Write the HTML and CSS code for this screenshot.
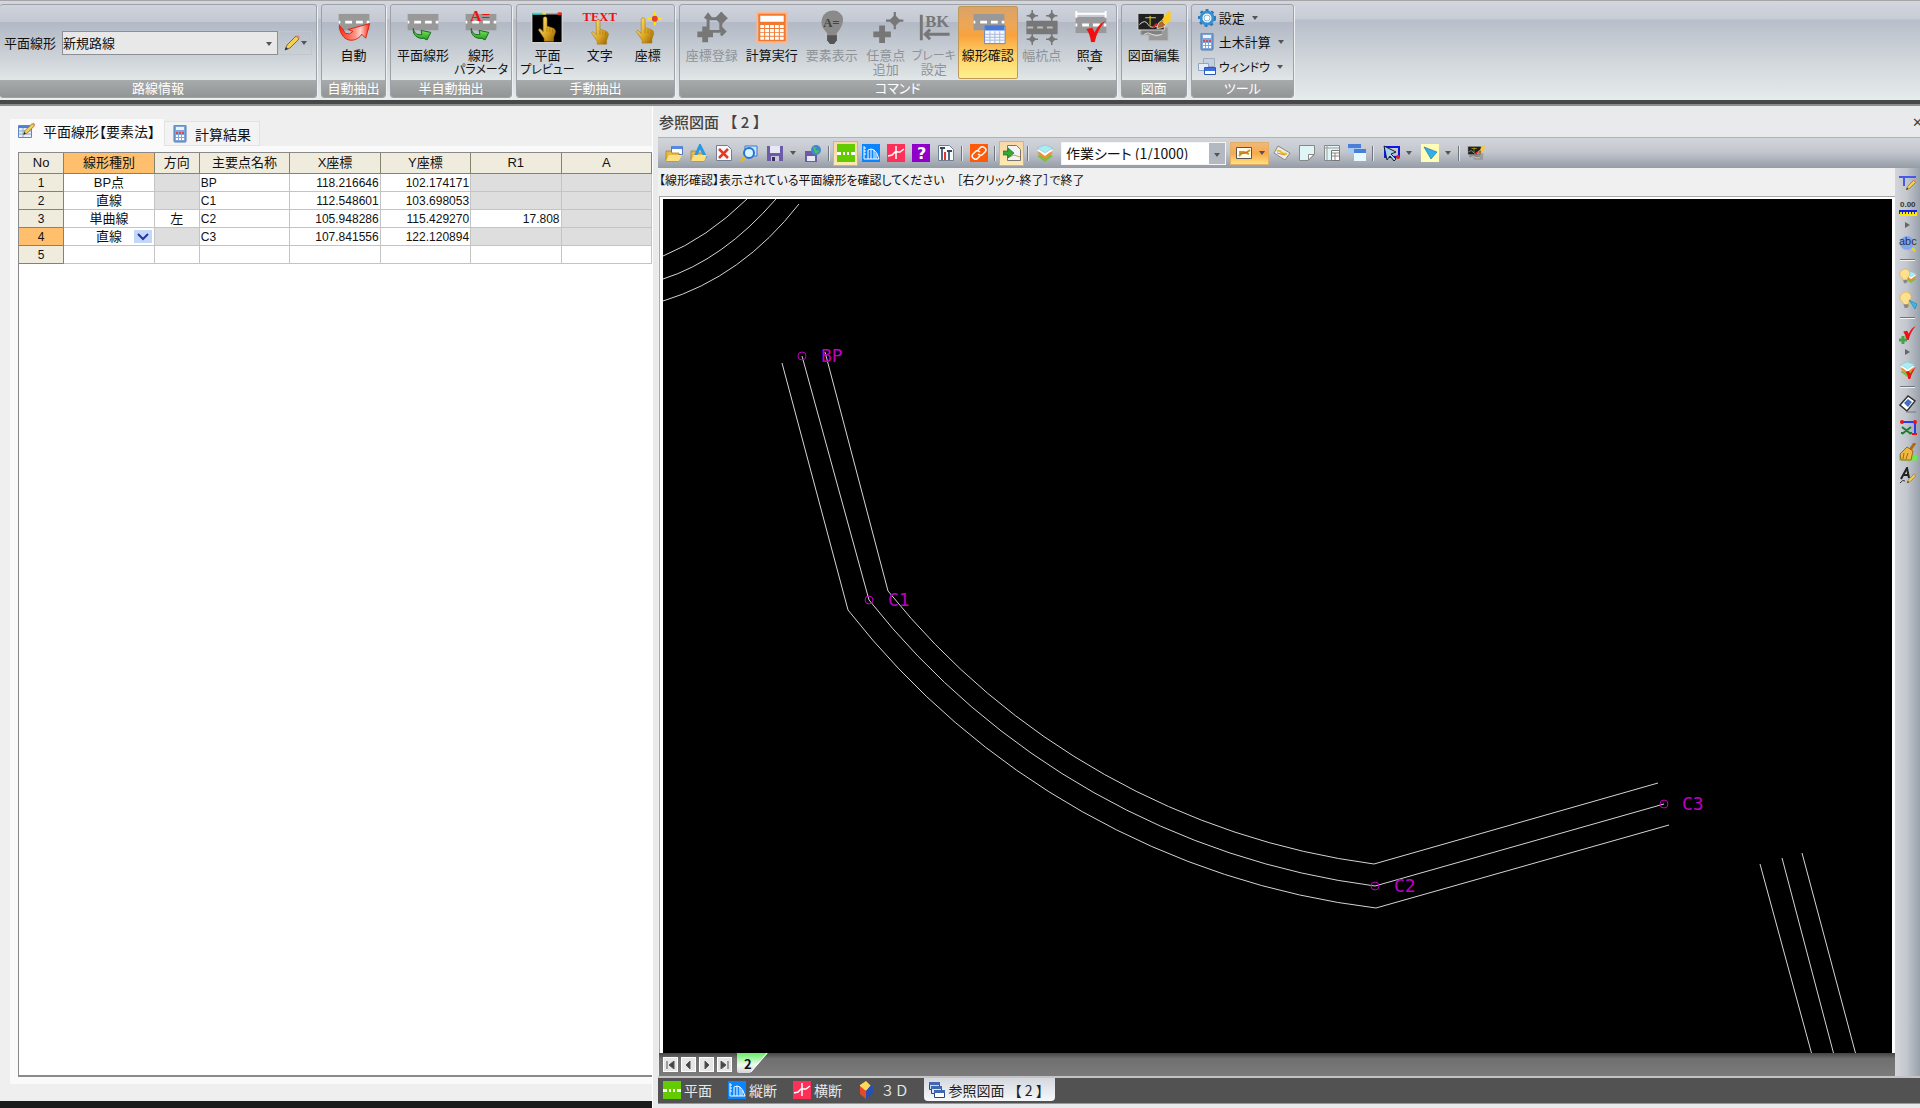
FILE: index.html
```html
<!DOCTYPE html>
<html lang="ja">
<head>
    <meta charset="UTF-8">
    <meta name="viewport" content="width=device-width, initial-scale=1.0">
    <title>平面線形</title>
    <link rel="stylesheet" href="styles.css">
</head>
<body>

    <!-- Shared icon parts -->
    <svg class="defs" width="0" height="0" aria-hidden="true">
        <defs>
            <linearGradient id="gold" x1="0" y1="0" x2="1" y2="1">
                <stop offset="0" stop-color="#ffe98a"/><stop offset="0.6" stop-color="#dba421"/><stop offset="1" stop-color="#8f5f08"/>
            </linearGradient>
            <linearGradient id="leaf" x1="0" y1="0" x2="0" y2="1">
                <stop offset="0" stop-color="#8df06a"/><stop offset="1" stop-color="#1c9a1c"/>
            </linearGradient>
            <linearGradient id="flame" x1="0" y1="0" x2="1" y2="0">
                <stop offset="0" stop-color="#ff2a10"/><stop offset="0.5" stop-color="#ff9080"/><stop offset="0.7" stop-color="#ffd0c8"/><stop offset="1" stop-color="#f02c10"/>
            </linearGradient>
            <linearGradient id="sheetTab" x1="0" y1="0" x2="0" y2="1">
                <stop offset="0" stop-color="#62ee62"/><stop offset="0.6" stop-color="#f2fbf2"/><stop offset="1" stop-color="#d4d4dc"/>
            </linearGradient>
        </defs>
        <symbol id="road" viewBox="0 0 32 17">
            <path fill="currentColor" d="M0 0h32v17H0z"/>
            <path fill="#fff" d="M0 7h2v3H0zM7 7h7v3H7zM18 7h7v3h-7zM29 7h3v3h-3z"/>
        </symbol>
        <symbol id="turn" viewBox="0 0 20 14">
            <path d="M1 2c1 6 5 7 9 6l-1-4 10 2-4 8-3-2C6 13 0 9 1 2z" fill="url(#leaf)" stroke="#14681a"/>
        </symbol>
        <symbol id="hand" viewBox="0 0 20 28">
            <path d="M6 17V3q0-2 2-2t2 2v8l6 2q3 1 3 4l-2 6v4H7v-3l-6-9q1-3 5 2z" fill="url(#gold)" stroke="#a87812" stroke-width="0.6"/>
            <path d="M10 12v5M13 13v4M16 14v4" stroke="#9c6c0c" stroke-width="0.7"/>
        </symbol>
        <symbol id="spark" viewBox="0 0 12 12">
            <path d="M6 0v12M0 6h12" stroke="currentColor" stroke-width="1.5"/>
            <path d="M6 2l4 4-4 4-4-4z" fill="currentColor"/>
        </symbol>
        <symbol id="tick" viewBox="0 0 18 18">
            <path d="M1 7l5-1 2 4q3-7 9-10Q10 8 8 18H5Q4 11 1 7z" fill="#f01010"/>
        </symbol>
        <symbol id="caret" viewBox="0 0 6 4"><path d="M0 0h6L3 4z" fill="#555"/></symbol>
        <symbol id="arrow-right" viewBox="0 0 5 6"><path d="M0 0l5 3-5 3z" fill="#666"/></symbol>
        <symbol id="pencil" viewBox="0 0 18 18">
            <path d="M2 16l2-5L13 2l3 3-9 9z" fill="#f3cf55" stroke="#6b5320" stroke-width="0.8"/>
            <path d="M13 2l2-1 2 2-1 2z" fill="#e88878"/><path d="M2 16l1-3 2 2z" fill="#222"/>
        </symbol>
        <symbol id="calc" viewBox="0 0 16 18">
            <rect x="2" y="0" width="12" height="17" rx="1" fill="#7ea6dc" stroke="#5078b0"/>
            <path fill="#e8f3ff" d="M4 2h8v3H4z"/>
            <path d="M4 8h8M4 11h8M4 14h8" stroke="#fff" stroke-width="2" stroke-dasharray="2 1"/>
            <path d="M4 8h8" stroke="#e04848" stroke-width="2" stroke-dasharray="2 1"/>
        </symbol>
        <symbol id="plan" viewBox="0 0 18 18">
            <path fill="#63cc00" d="M0 0h18v18H0z"/><path fill="#fff" d="M0 8h4v3H0zM6 8h2v3H6zM10 8h2v3h-2zM14 8h4v3h-4z"/>
        </symbol>
        <symbol id="profile" viewBox="0 0 18 18">
            <path fill="#0a84ff" d="M0 0h18v18H0z"/>
            <path d="M2 2v13h15M2 4h2M2 7h2M2 10h2M6 15V6l3-1v10M12 15V6l-3-1M12 6q3 2 5 9M14 15V9" fill="none" stroke="#fff"/>
        </symbol>
        <symbol id="cross" viewBox="0 0 18 18">
            <path fill="#ff3058" d="M0 0h18v18H0z"/>
            <path d="M1 12l4-1 3-3h5l4-3M9 2v13" fill="none" stroke="#fff" stroke-width="1.5"/>
        </symbol>
        <symbol id="stack" viewBox="0 0 18 18">
            <path d="M1 12l8-3 8 3-8 6z" fill="#78c040"/><path d="M1 9l8-3 8 3-8 6z" fill="#f09030"/>
            <path d="M1 6l8-3 8 3-8 6z" fill="#fff"/><path d="M1 4l8-3 8 3-8 5z" fill="#a8ecf4" stroke="#80b8c8" stroke-width="0.5"/>
        </symbol>
        <symbol id="windows" viewBox="0 0 18 18">
            <path fill="#c4d0e0" stroke="#a0acbc" d="M5.500.5h11v8h-11z"/><path fill="#e4ecf8" stroke="#90a4c4" d="M.5 5.500h10v7h-10z"/>
            <path fill="#fff" stroke="#2c58b8" d="M6.500 9.500h11v7h-11z"/><path fill="#3c70e0" d="M7 10h10v3H7z"/>
        </symbol>
        <symbol id="bulb" viewBox="0 0 18 18">
            <path d="M4 11Q0 8 1 4.500Q3 0 7 0q5 0 6 5 0 3-3 6v3H5z" fill="#ffe08c" stroke="#d8a850" stroke-width="0.7"/>
            <path fill="#888" d="M5 13h5v3l-2 1H6z"/>
        </symbol>
        <symbol id="drawing" viewBox="0 0 36 32">
            <path fill="#999" stroke="#bbb" d="M12.500 16.500h20v14h-20z"/><path fill="#808080" stroke="#aaa" d="M4.500 12.500h22v12h-22z"/>
            <path fill="#202020" stroke="#ddd" d="M1.500 2.500h27v17h-27z"/>
            <path d="M3 14q6-6 9 0t14-1M8 24q4-3 8 0t10 0" fill="none" stroke="#ddd"/><path d="M14 5v10M9 7h11" stroke="#e6d820"/>
            <path d="M17 17l4-4" stroke="#e02020" stroke-width="2"/>
            <path d="M26 9L33 0l2 1v9l-5 4z" fill="#ffca20"/><path d="M21 18q1-7 5-8l4 4q-2 4-9 4z" fill="#b06828" stroke="#fff" stroke-width="0.7"/>
        </symbol>
    </svg>

    <header class="ribbon">
        <section class="group route">
            <div class="group-body">
                <label for="route">平面線形</label>
                <div class="select-box route-select">
                    <select id="route"><option>新規路線</option></select>
                    <svg class="caret"><use href="#caret"/></svg>
                </div>
                <button class="edit" aria-label="編集">
                    <svg width="18" height="18"><use href="#pencil"/></svg>
                    <svg class="caret"><use href="#caret"/></svg>
                </button>
            </div>
            <h2>路線情報</h2>
        </section>

        <section class="group auto">
            <div class="group-body">
                <button class="big">
                    <svg viewBox="0 0 36 42"><use href="#road" x="2" y="7" width="32" height="17"/>
                        <path d="M3 19q4 3 6 8 5 2 8-2l-5-2 22-6-4 15-4-4C19 38 4 36 3 19z" fill="url(#flame)" stroke="#e02010"/></svg>
                    自動
                </button>
            </div>
            <h2>自動抽出</h2>
        </section>

        <section class="group">
            <div class="group-body">
                <button class="big">
                    <svg viewBox="0 0 36 42"><use href="#road" x="2" y="7" width="32" height="17"/><use href="#turn" x="7" y="20" width="20" height="14"/></svg>
                    平面線形
                </button>
                <button class="big kana">
                    <svg viewBox="0 0 36 42"><use href="#road" x="2" y="7" width="32" height="17"/><use href="#turn" x="7" y="20" width="20" height="14"/>
                        <text x="7" y="14" class="red-text">A=</text></svg>
                    線形<span>パラメータ</span>
                </button>
            </div>
            <h2>半自動抽出</h2>
        </section>

        <section class="group">
            <div class="group-body">
                <button class="big kana">
                    <svg viewBox="0 0 36 42"><path stroke="#eee" d="M2.500 5.500h31v31h-31z"/><path stroke="#3ad8d8" stroke-width="2" d="M3 7h10"/>
                        <path stroke="#e8e820" stroke-width="2" d="M13 7h4"/><path stroke="#fff" d="M17 7h13"/><path stroke="#e03030" stroke-width="3" d="M29 7h4"/>
                        <use href="#hand" x="8" y="9" width="20" height="27"/></svg>
                    平面<span>プレビュー</span>
                </button>
                <button class="big">
                    <svg viewBox="0 0 36 42"><text x="0" y="14" class="red-text small">TEXT</text><use href="#hand" x="8" y="12" width="20" height="27"/></svg>
                    文字
                </button>
                <button class="big">
                    <svg viewBox="0 0 36 42"><use href="#hand" x="5" y="10" width="20" height="28"/>
                        <path d="M25 5v14M18 12h14" stroke="#ffe800" stroke-width="2"/><circle cx="25" cy="12" r="3" fill="#e84020"/></svg>
                    座標
                </button>
            </div>
            <h2>手動抽出</h2>
        </section>

        <section class="group">
            <div class="group-body">
                <button class="big" disabled>
                    <svg viewBox="0 0 36 42" fill="none" stroke="#777" stroke-width="3"><path d="M14 24V9M11 12l3-4 3 4M14 25h17M27 21l4 4-4 4M14 12h13v12"/>
                        <path stroke-width="6" d="M11 20v16M3 28h16"/><use href="#spark" x="21" y="5" width="13" height="13"/></svg>
                    座標登録
                </button>
                <button class="big">
                    <svg viewBox="0 0 36 42"><path fill="#f07830" stroke="#f8b890" stroke-width="2" d="M3 6h30v30H3z"/><path fill="#fff" d="M6 9h24v6H6z"/>
                        <path d="M6 20h24M6 24h24M6 28h24M6 32h24" stroke="#fff" stroke-width="3" stroke-dasharray="4 1"/></svg>
                    計算実行
                </button>
                <button class="big" disabled>
                    <svg viewBox="0 0 36 42"><path d="M13 27Q5 19 8 11q4-9 15-7 8 4 6 12-1 5-6 11v7l-3 4h-4l-3-4z" fill="#8a8a8a"/>
                        <path d="M13 29h10v5l-3 4h-4l-3-4z" fill="#555"/><text x="9" y="21" class="bulb-text">A=</text></svg>
                    要素表示
                </button>
                <button class="big" disabled>
                    <svg viewBox="0 0 36 42"><path stroke="#777" stroke-width="6" d="M14 19v18M5 28h18"/><use href="#spark" x="18" y="5" width="18" height="18"/></svg>
                    任意点<br>追加
                </button>
                <button class="big kana" disabled>
                    <svg viewBox="0 0 36 42"><path stroke="#777" stroke-width="3" fill="none" d="M5 8v26M9 28h25M14 23l-5 5 5 5"/><text x="9" y="21" class="bk-text">BK</text></svg>
                    <span>ブレーキ</span>設定
                </button>
                <button class="big active">
                    <svg viewBox="0 0 36 42"><use href="#road" x="3" y="7" width="32" height="17"/>
                        <path fill="#f4f8ff" stroke="#6888c0" d="M14.500 19.500h21v18h-21z"/><path fill="#4878d8" d="M15 19h20v5H15z"/>
                        <path d="M15 28h20M15 31h20M15 34h20M20 25v12M25 25v12M30 25v12" stroke="#a8b8d8"/></svg>
                    線形確認
                </button>
                <button class="big" disabled>
                    <svg viewBox="0 0 36 42"><path fill="#777" d="M2 14h32v14H2z"/><path d="M3 21h30" stroke="#bbb" stroke-width="2" stroke-dasharray="6 4"/>
                        <use href="#spark" x="2" y="3" width="12" height="12"/><use href="#spark" x="22" y="3" width="12" height="12"/>
                        <use href="#spark" x="2" y="27" width="12" height="12"/><use href="#spark" x="22" y="27" width="12" height="12"/></svg>
                    幅杭点
                </button>
                <button class="big">
                    <svg viewBox="0 0 36 42"><use href="#road" x="3" y="10" width="32" height="17"/><path stroke="#fff" stroke-width="2" d="M3 7h32M4 4v7M34 4v7"/>
                        <use href="#tick" x="12" y="14" width="24" height="22"/></svg>
                    照査<svg class="caret"><use href="#caret"/></svg>
                </button>
            </div>
            <h2>コマンド</h2>
        </section>

        <section class="group">
            <div class="group-body">
                <button class="big">
                    <svg viewBox="0 0 36 42"><use href="#drawing" x="0" y="4" width="36" height="32"/></svg>
                    図面編集
                </button>
            </div>
            <h2>図面</h2>
        </section>

        <section class="group tools">
            <div class="group-body column">
                <button class="row-button">
                    <svg width="18" height="18"><circle cx="9" cy="9" r="6" fill="#fff" stroke="#3890d0" stroke-width="3"/>
                        <circle cx="9" cy="9" r="8" fill="none" stroke="#2878b8" stroke-width="2" stroke-dasharray="3 3"/>
                        <circle cx="9" cy="9" r="3" fill="none" stroke="#80b8e0"/></svg>
                    設定<svg class="caret"><use href="#caret"/></svg>
                </button>
                <button class="row-button"><svg width="18" height="18"><use href="#calc"/></svg>土木計算<svg class="caret"><use href="#caret"/></svg></button>
                <button class="row-button kana"><svg width="18" height="18"><use href="#windows"/></svg><span>ウィンドウ</span><svg class="caret"><use href="#caret"/></svg></button>
            </div>
            <h2>ツール</h2>
        </section>
    </header>

    <main>
        <div class="left-pane">
            <div class="tabs">
                <button class="tab selected">
                    <svg width="18" height="18"><path fill="#e4eefc" stroke="#6088c0" d="M.5 3.500h13v12H.5z"/><path fill="#5080d0" d="M1 4h12v2H1z"/>
                        <path d="M1 9h12M1 12h12M5 6v9" stroke="#90a8d0"/><use href="#pencil" x="4" y="0" width="14" height="14"/></svg>
                    平面線形【要素法】
                </button>
                <button class="tab"><svg width="16" height="18"><use href="#calc"/></svg>計算結果</button>
            </div>
            <div class="tab-page">
                <div class="grid">
                    <table>
                        <colgroup>
                            <col class="narrow"><col><col class="narrow"><col><col><col><col><col>
                        </colgroup>
                        <thead>
                            <tr><th>No</th><th class="current">線形種別</th><th>方向</th><th>主要点名称</th><th>X座標</th><th>Y座標</th><th>R1</th><th>A</th></tr>
                        </thead>
                        <tbody>
                            <tr><th>1</th><td class="center">BP点</td><td class="off"></td><td>BP</td><td class="num">118.216646</td><td class="num">102.174171</td><td class="off"></td><td class="off"></td></tr>
                            <tr><th>2</th><td class="center">直線</td><td class="off"></td><td>C1</td><td class="num">112.548601</td><td class="num">103.698053</td><td class="off"></td><td class="off"></td></tr>
                            <tr><th>3</th><td class="center">単曲線</td><td class="center">左</td><td>C2</td><td class="num">105.948286</td><td class="num">115.429270</td><td class="num">17.808</td><td class="off"></td></tr>
                            <tr>
                                <th class="current">4</th>
                                <td class="kind">
                                    <select aria-label="線形種別"><option>直線</option><option>単曲線</option></select>
                                    <svg viewBox="0 0 18 13"><path fill="#c4d6fa" d="M0 0h18v13H0z"/><path d="M4 4l5 5 5-5" fill="none" stroke="#2038a0" stroke-width="2"/></svg>
                                </td>
                                <td class="off"></td><td>C3</td><td class="num">107.841556</td><td class="num">122.120894</td><td class="off"></td><td class="off"></td>
                            </tr>
                            <tr><th>5</th><td></td><td></td><td></td><td></td><td></td><td></td><td></td></tr>
                        </tbody>
                    </table>
                </div>
            </div>
            <div class="taskbar"></div>
        </div>

        <div class="right-pane">
            <div class="title-bar">
                <h1>参照図面 【 2 】</h1>
                <button aria-label="閉じる">✕</button>
            </div>

            <div class="toolbar">
                <button class="tool" aria-label="開く"><svg viewBox="0 0 18 18"><path fill="#fff" stroke="#5078c0" d="M6.500 2.500h11v8h-11z"/><path fill="#5888e0" d="M7 2h10v3H7z"/><path fill="#e8b840" stroke="#a07820" stroke-width="0.7" d="M1 7h5l1 2h7v8H1z"/><path fill="#ffe080" d="M4 11h13l-3 6H1z"/></svg></button>
                <button class="tool" aria-label="CADを開く"><svg viewBox="0 0 18 18"><path fill="#e8b840" stroke="#a07820" stroke-width="0.7" d="M1 7h5l1 2h7v8H1z"/><path d="M5 13L10 2l6 12" fill="none" stroke="#2898e0" stroke-width="3"/><path fill="#ffe080" d="M4 11h13l-3 6H1z"/></svg></button>
                <button class="tool" aria-label="図面を閉じる"><svg viewBox="0 0 18 18"><path fill="#f6f8fa" stroke="#708090" d="M1.500 1.500h11l4 4v11h-15z"/><path d="M4 5l9 9M13 5l-9 9" stroke="#e83820" stroke-width="2.500"/></svg></button>
                <button class="tool" aria-label="検索"><svg viewBox="0 0 18 18"><path fill="#c8e4ff" stroke="#3878d0" d="M5 2h12v10H5z"/><circle cx="9" cy="9" r="5" fill="#d8f4ff" stroke="#2870d8" stroke-width="2"/><path d="M5 13l-4 4" stroke="#e8b820" stroke-width="3"/></svg></button>
                <button class="tool split" aria-label="保存"><svg viewBox="0 0 18 18"><path fill="#6c5ca8" d="M1 2h16v15H1z"/><path fill="#e8e8f4" d="M4 2h10v7H4z"/><path fill="#c8c8d8" d="M5 12h8v5H5z"/><path fill="#383060" d="M6 13h3v4H6z"/></svg><svg class="caret"><use href="#caret"/></svg></button>
                <button class="tool" aria-label="Web保存"><svg viewBox="0 0 18 18"><path fill="#6c5ca8" d="M1 7h12v11H1z"/><path fill="#e8e8f4" d="M3 12h8v5H3z"/><circle cx="12" cy="6" r="5" fill="#3c88d8"/><path d="M9 3q3-1 3 2t3 1q0 4-4 3z" fill="#50c048"/></svg></button>
                <span class="sep"></span>
                <button class="tool on" aria-label="平面"><svg><use href="#plan"/></svg></button>
                <button class="tool" aria-label="縦断"><svg><use href="#profile"/></svg></button>
                <button class="tool" aria-label="横断"><svg><use href="#cross"/></svg></button>
                <button class="tool" aria-label="ヘルプ"><svg viewBox="0 0 18 18"><path fill="#9000c8" d="M0 0h18v18H0z"/><text x="5" y="15" class="help-text">?</text></svg></button>
                <button class="tool" aria-label="設定"><svg viewBox="0 0 18 18"><path fill="#f6f8fa" stroke="#708090" d="M1.500 1.500h11l4 4v11h-15z"/><path d="M5 4v12M12 8v8" stroke="#506880" stroke-width="2"/><path d="M8 8v8" stroke="#e03828" stroke-width="2"/><path d="M3 4h5M10 7h5" stroke="#384858" stroke-width="2"/></svg></button>
                <span class="sep"></span>
                <button class="tool" aria-label="リンク"><svg viewBox="0 0 18 18"><path fill="#ff5a08" d="M0 0h18v18H0z"/><path d="M8 6l3-3q2-1 4 1t0 4l-3 3q-2 1-4-1M10 12l-3 3q-2 1-4-1t0-4l3-3q2-1 4 1" fill="none" stroke="#fff" stroke-width="1.500"/></svg></button>
                <span class="sep"></span>
                <button class="tool on" aria-label="取込"><svg viewBox="0 0 18 18"><path fill="#f4f4f4" stroke="#777" d="M4.500 1.500h9l4 4v11h-13z"/><path d="M6 13l5-2 6 2" fill="none" stroke="#c0a060"/><path d="M0 7h5V4l6 5-6 5v-3H0z" fill="#38a838" stroke="#18701c" stroke-width="0.7"/></svg></button>
                <span class="sep"></span>
                <button class="tool" aria-label="レイヤ"><svg><use href="#stack"/></svg></button>
                <div class="select-box sheet-select">
                    <select aria-label="シート"><option>作業シート (1/1000)</option></select>
                    <svg class="caret"><use href="#caret"/></svg>
                </div>
                <button class="tool split on" aria-label="表示"><svg viewBox="0 0 18 18"><path fill="#fffbe8" stroke="#555" d="M1.500 3.500h15v11h-15z"/><path d="M4 12l3-3h4l4-3M4 8h5l5 2" fill="none" stroke="#c0a020" stroke-width="2"/><path d="M4 10l9-2" stroke="#e06020"/></svg><svg class="caret"><use href="#caret"/></svg></button>
                <button class="tool" aria-label="回転"><svg viewBox="0 0 18 18"><path fill="#e8eef0" stroke="#888" d="M5 2l12 7-5 7L1 9z"/><path d="M4 7q3-1 4 1t6 2" fill="none" stroke="#e8c020" stroke-width="2"/><path d="M4 9l8 2" stroke="#e88040"/></svg></button>
                <button class="tool" aria-label="用紙"><svg viewBox="0 0 18 18"><path fill="#e0f6f6" stroke="#888" d="M1.500 1.500h15v9l-6 6h-9z"/><path fill="#fff" stroke="#888" d="M16 10.500h-5.500V16z"/></svg></button>
                <button class="tool" aria-label="表"><svg viewBox="0 0 18 18"><path fill="#e0f6f6" stroke="#888" d="M1.500 1.500h15v15h-15z"/><path d="M4 1v15M1 4h15" stroke="#999"/><path fill="#fff" stroke="#777" d="M8.500 6.500h8v10h-8z"/><path d="M9 9h7M9 12h7M12 9v7" stroke="#888"/></svg></button>
                <button class="tool" aria-label="ウィンドウ"><svg viewBox="0 0 18 18"><path fill="#a8c8f0" d="M0 0h13v10H0z"/><path fill="#4880d8" d="M0 0h13v4H0z"/><path fill="#e8f8ff" d="M6 6h12v11H6z"/><path fill="#4880d8" d="M6 5h12v4H6z"/></svg></button>
                <span class="sep"></span>
                <button class="tool split" aria-label="選択"><svg viewBox="0 0 18 18"><path fill="none" stroke="#1018e0" stroke-width="2" d="M3 3h14v10H3z"/><path d="M2 2l12 6-5 2 5 5-2 2-4-5-3 4z" fill="#a8d0e8" stroke="#102030"/><circle cx="16" cy="13" r="2" fill="#e02020"/></svg><svg class="caret"><use href="#caret"/></svg></button>
                <button class="tool split" aria-label="カーソル"><svg viewBox="0 0 18 18"><path fill="#fffcb8" d="M0 0h18v18H0z"/><path d="M3 3l13 5-6 7z" fill="#30b0e8" stroke="#2878a8" stroke-width="0.700"/></svg><svg class="caret"><use href="#caret"/></svg></button>
                <span class="sep"></span>
                <button class="tool" aria-label="図面編集"><svg><use href="#drawing"/></svg></button>
            </div>

            <div class="work">
                <div class="view">
                    <p class="message">【線形確認】表示されている平面線形を確認してください　［右クリック-終了］で終了</p>
                    <div class="canvas">
                        <svg width="100%" height="100%">
                            <g class="lines">
                                <!-- neighbouring roads -->
                                <path d="M0 57Q44 39 84 0M0 80Q60 61 113 0M0 102Q79 78 136 5"/>
                                <path d="M1097 665L1149 856M1119 659L1171 856M1139 654L1193 856"/>
                                <!-- left edge, centre line, right edge -->
                                <path d="M119 164L185 411A790 790 0 0 0 713 709L1006 626"/>
                                <path d="M139 157L206 401A769 769 0 0 0 712 687L1001 605"/>
                                <path d="M162 153L225 392A747 747 0 0 0 711 665L995 584"/>
                            </g>
                            <g class="points">
                                <circle cx="139" cy="157" r="4"/><circle cx="206" cy="401" r="4"/>
                                <circle cx="712" cy="687" r="4"/><circle cx="1001" cy="605" r="4"/>
                                <text x="158" y="163">BP</text><text x="225" y="407">C1</text>
                                <text x="731" y="693">C2</text><text x="1019" y="611">C3</text>
                            </g>
                        </svg>
                    </div>
                    <div class="sheet-bar">
                        <button aria-label="最初"><svg viewBox="0 0 9 8"><path d="M1 0v8M8 0v8L3 4z"/></svg></button>
                        <button aria-label="前"><svg viewBox="0 0 9 8"><path d="M6 0v8L2 4z"/></svg></button>
                        <button aria-label="次"><svg viewBox="0 0 9 8"><path d="M3 0v8l4-4z"/></svg></button>
                        <button aria-label="最後"><svg viewBox="0 0 9 8"><path d="M8 0v8M1 0v8l5-4z"/></svg></button>
                        <div class="sheet">
                            <svg viewBox="0 0 31 20"><path d="M0 0h31L15 18q-1 2-3 2H2q-2 0-2-2z" fill="url(#sheetTab)"/><path d="M30 0L14 19" stroke="#fff"/></svg>
                            <span>2</span>
                        </div>
                    </div>
                </div>

                <div class="side-tools">
                    <button class="tool" aria-label="寸法"><svg viewBox="0 0 18 18"><path d="M0 2h17M5 2v9" stroke="#4858e8" stroke-width="2"/><use href="#pencil" x="6" y="4" width="12" height="12"/></svg></button>
                    <button class="tool" aria-label="距離"><svg viewBox="0 0 18 18"><text x="1" y="8" class="tiny-text">0.00</text><path fill="#ffe800" d="M0 12h18v5H0z"/><path d="M0 12h18" stroke="#1020e0" stroke-width="2"/><path d="M0 14h18" stroke="#1020e0" stroke-width="2" stroke-dasharray="1 2"/></svg></button>
                    <svg class="more"><use href="#arrow-right"/></svg>
                    <button class="tool" aria-label="文字検索"><svg viewBox="0 0 18 18"><circle cx="8" cy="9" r="7" fill="#80a8f0"/><path d="M13 14l3 3" stroke="#f8d800" stroke-width="2"/><text x="0" y="11" class="abc-text">abc</text></svg></button>
                    <span class="line"></span>
                    <button class="tool" aria-label="レイヤ表示"><svg viewBox="0 0 18 18"><use href="#stack" x="6" y="2" width="12" height="14"/><use href="#bulb" x="0" y="0" width="15" height="17"/></svg></button>
                    <button class="tool" aria-label="要素表示"><svg viewBox="0 0 18 18"><use href="#bulb" x="0" y="0" width="17" height="17"/><path d="M10 8l8 4-2 5z" fill="#38b8e8" stroke="#2080a0" stroke-width="0.600"/></svg></button>
                    <span class="line"></span>
                    <button class="tool" aria-label="チェック追加"><svg viewBox="0 0 18 18"><use href="#tick" x="3" y="0" width="15" height="14"/><path d="M4 10v8M0 14h8" stroke="#48a048" stroke-width="3"/></svg></button>
                    <svg class="more"><use href="#arrow-right"/></svg>
                    <button class="tool" aria-label="レイヤチェック"><svg viewBox="0 0 18 18"><use href="#stack" x="0" y="0" width="17" height="16"/><use href="#tick" x="6" y="6" width="12" height="12"/></svg></button>
                    <span class="line"></span>
                    <button class="tool" aria-label="消去"><svg viewBox="0 0 18 18"><path d="M1 10l8-9 7 5-8 10z" fill="#fff" stroke="#333" stroke-width="1.500"/><path d="M5 8l4-4 4 3-4 5z" fill="#4070c0"/><path d="M7 17h10" stroke="#777"/></svg></button>
                    <button class="tool" aria-label="切取"><svg viewBox="0 0 18 18"><path d="M2 3h14v12" fill="none" stroke="#3038f0" stroke-width="2"/><circle cx="3" cy="3" r="2" fill="#f01010"/><circle cx="16" cy="3" r="2" fill="#f01010"/><path d="M3 8l9 7M12 8l-9 7M2 14h3M10 14h3" stroke="#188030" stroke-width="2"/><path d="M13 15h5" stroke="#f01010" stroke-width="2"/></svg></button>
                    <button class="tool" aria-label="整理"><svg viewBox="0 0 18 18"><path d="M0 15h18" stroke="#70e850" stroke-width="5"/><path d="M16 0l-5 7" stroke="#b06820" stroke-width="3"/><path d="M8 4l6 4-2 9H2L1 11z" fill="#f0b840" stroke="#986818"/><path d="M5 10l-1 6M9 10l-2 6" stroke="#986818"/></svg></button>
                    <button class="tool" aria-label="文字編集"><svg viewBox="0 0 18 18"><path d="M2 12l6-11 2 10M4 8h6" fill="none" stroke="#222" stroke-width="2"/><use href="#pencil" x="7" y="6" width="11" height="11"/><path d="M1 16q3-4 5-2" fill="none" stroke="#333"/></svg></button>
                </div>
            </div>

            <nav class="view-tabs">
                <button><svg><use href="#plan"/></svg>平面</button>
                <button><svg><use href="#profile"/></svg>縦断</button>
                <button><svg><use href="#cross"/></svg>横断</button>
                <button class="solid"><svg viewBox="0 0 18 18"><path d="M8 0l5 5-5 5-6-3V4z" fill="#ffd858"/><path d="M2 5l6 5v8l-6-5z" fill="#e84828"/><path d="M8 10l5-6 2 1v7l-7 6z" fill="#2850b0"/></svg>３ Ｄ</button>
                <button class="selected"><svg viewBox="0 0 18 18"><g stroke="#284880"><path fill="#c8d8f0" d="M1.500 1.500h10v7h-10z"/><path fill="#dce6f8" d="M3.500 5.500h10v7h-10z"/><path fill="#fff" d="M6.500 9.500h10v7h-10z"/></g><path fill="#4068b0" d="M1 1h11v3H1zM3 5h11v3H3zM6 9h11v3H6z"/></svg>参照図面 【 2 】</button>
            </nav>
        </div>
    </main>

</body>
</html>
```
FILE: styles.css
```css
* {
    box-sizing: border-box;
}

body {
    display: flex;
    flex-direction: column;
    height: 100vh;
    margin: 0;
    overflow: hidden;
    background-color: #efefef;
    color: #111;
    font-family: "Noto Sans CJK JP", sans-serif;
    font-size: 13px;
    line-height: 14px;
    font-feature-settings: "palt";
}

button, select {
    margin: 0;
    padding: 0;
    border: none;
    background: none;
    color: inherit;
    font: inherit;
    font-feature-settings: inherit;
    white-space: nowrap;
}

select {
    appearance: none;
    width: 100%;
    height: 100%;
}

h1, h2, p {
    margin: 0;
    font-weight: normal;
}

svg {
    display: block;
    flex: none;
}

.defs {
    position: absolute;
}

.caret {
    width: 6px;
    height: 4px;
}

/* Ribbon */
.ribbon {
    display: flex;
    gap: 4px;
    height: 104px;
    flex: none;
    padding: 3px 0 2px;
    border-top: 1px solid #a5a5a8;
    border-bottom: 4px solid #484848;
    background: linear-gradient(#d3d6de, #c8ccd5 18%, #b9bfca 19%, #d0d6da 60%, #e6ecec);
}

.group {
    display: flex;
    flex-direction: column;
    border: 1px solid #9ea2a8;
    border-radius: 3px;
    overflow: hidden;
    box-shadow: 1px 1px #eef0f2;
    background: linear-gradient(#cfd3dc, #c3c8d2 18%, #b3b9c5 19%, #d0d6da 62%, #e4eaea 84%);
}

.group h2 {
    height: 17px;
    flex: none;
    background: linear-gradient(#a8abab, #929595);
    color: #fff;
    font-size: 13px;
    line-height: 16px;
    text-align: center;
}

.group-body {
    display: flex;
    flex: 1;
    justify-content: center;
    min-height: 0;
    padding: 1px 2px;
}

.group-body.column {
    flex-direction: column;
    justify-content: space-around;
    padding: 1px 6px;
}

.route {
    width: 317px;
    border-left: none;
}

.route .group-body {
    align-items: center;
    justify-content: flex-start;
    padding: 0 4px;
}

.auto {
    width: 65px;
}

.tools {
    width: 103px;
}

.select-box {
    position: relative;
    height: 24px;
}

.select-box .caret {
    position: absolute;
    right: 5px;
    top: 10px;
    pointer-events: none;
}

.route-select {
    width: 216px;
    margin-left: 6px;
    border: 1px solid #8c8f94;
    background-color: #e8e8e8;
}

.edit {
    display: flex;
    align-items: center;
    justify-content: space-between;
    width: 34px;
    height: 24px;
    padding: 0 4px;
    border: 1px solid #c0c8cc;
}

.big {
    display: flex;
    flex-direction: column;
    align-items: center;
    min-width: 48px;
    padding: 0 3px;
    border: 1px solid transparent;
    color: #111;
}

.big.kana {
    padding: 0;
}

.kana span {
    font-size: 12px;
}

.big > svg:first-child {
    width: 36px;
    height: 41px;
    color: #999;
}

.big .caret {
    margin-top: 5px;
}

.big:disabled {
    color: #8f9398;
}

.big:disabled > svg:first-child {
    color: #777;
}

.big.active {
    border-color: #c09858;
    border-radius: 2px;
    background: linear-gradient(#d9a368, #f0a654 28%, #f8a23c 40%, #ffd46a 70%, #fff08c);
}

.red-text {
    fill: #f01010;
    font: bold 16px "Liberation Serif", serif;
}

.red-text.small {
    font-size: 13px;
}

.bulb-text {
    fill: #444;
    font: bold 13px "Liberation Serif", serif;
}

.bk-text {
    fill: #777;
    font: bold 17px "Liberation Serif", serif;
}

.row-button {
    display: flex;
    align-items: center;
    gap: 3px;
}

.row-button .caret {
    margin-left: 4px;
}

/* Panes */
main {
    display: flex;
    flex: 1;
    min-height: 0;
    border-top: 2px solid #8c8c8c;
}

.left-pane {
    display: flex;
    flex-direction: column;
    width: 652px;
    padding-top: 13px;
}

.tabs {
    display: flex;
    align-items: flex-end;
    padding-left: 10px;
}

.tab {
    display: flex;
    align-items: center;
    gap: 7px;
    height: 25px;
    padding: 0 8px 0 7px;
    border: 1px solid #e2e2e2;
    background-color: #f3f3f3;
    font-size: 14px;
}

.tab.selected {
    height: 27px;
    padding-bottom: 3px;
    border-color: #fafafa;
    background-color: #fafafa;
}

.tab-page {
    flex: 1;
    margin-left: 10px;
    padding: 6px 0 7px 8px;
    background-color: #fafafa;
}

.grid {
    height: 100%;
    border: 1px solid #8a8a8a;
    border-right: none;
    border-bottom-width: 2px;
    background-color: #fff;
}

.taskbar {
    height: 24px;
    border-top: 17px solid #efefef;
    background-color: #1b1b1b;
}

table {
    width: 100%;
    table-layout: fixed;
    border-spacing: 0;
}

col {
    width: 90px;
}

.narrow {
    width: 45px;
}

th, td {
    height: 18px;
    padding: 0 1px;
    border-right: 1px solid #c4c4c4;
    border-bottom: 1px solid #c4c4c4;
    font-family: "Liberation Sans", "Noto Sans CJK JP", sans-serif;
    font-size: 12px;
    line-height: 14px;
    overflow: hidden;
    white-space: nowrap;
}

th {
    border-color: #84846c;
    background-color: #efecde;
    font-weight: normal;
}

thead th {
    height: 21px;
    font-size: 13px;
}

.current {
    background-color: #ffbf6c;
}

.center {
    text-align: center;
}

.num {
    text-align: right;
}

.off {
    background-color: #dedede;
}

td.center, .kind select {
    font-size: 13px;
}

.kind {
    position: relative;
}

.kind select {
    display: block;
    height: 14px;
    text-align: center;
    text-align-last: center;
}

.kind svg {
    position: absolute;
    right: 2px;
    top: 2px;
    width: 18px;
    height: 13px;
    pointer-events: none;
}

.right-pane {
    display: flex;
    flex: 1;
    flex-direction: column;
    min-width: 0;
    padding: 0 0 4px 5px;
    border-left: 1px solid #fff;
    background-color: #e9eaeb;
}

.title-bar {
    display: flex;
    align-items: center;
    justify-content: space-between;
    height: 32px;
    padding-left: 1px;
    border-bottom: 1px solid #b0b2b4;
    overflow: hidden;
    color: #444;
}

.title-bar h1 {
    font-size: 15px;
    font-weight: 500;
    line-height: 20px;
    font-feature-settings: normal;
}

.title-bar button {
    margin-right: -3px;
}

.toolbar {
    display: flex;
    align-items: center;
    height: 30px;
    padding-left: 3px;
    background: linear-gradient(#d2d5da, #c4c8ce 45%, #959ca7);
}

.tool {
    display: flex;
    align-items: center;
    justify-content: center;
    width: 25px;
    height: 25px;
    flex: none;
    border: 1px solid transparent;
}

.tool > svg:first-child {
    width: 18px;
    height: 18px;
}

.tool.split {
    gap: 6px;
    width: 39px;
}

.tool.on {
    border-color: #e0b068;
    background: linear-gradient(#f8d8a8, #ffe8b0);
}

.tool.split.on {
    height: 23px;
    background: linear-gradient(#f0b878, #fba94c 50%, #ffe080);
}

.sep {
    width: 2px;
    height: 15px;
    margin: 0 3px;
    border-left: 1px solid #6f757e;
    border-right: 1px solid #e4e6ea;
}

.sheet-select {
    width: 165px;
    height: 23px;
    margin: 0 4px;
    border: 1px solid #f4f4f4;
    background: linear-gradient(90deg, #fff 147px, #b4b9c1 147px);
    font-size: 14px;
}

.sheet-select select {
    padding-left: 4px;
}

.work {
    display: flex;
    flex: 1;
    min-height: 0;
}

.view {
    display: flex;
    flex: 1;
    flex-direction: column;
    padding-left: 1px;
    background-color: #f0f0f0;
}

.message {
    height: 28px;
    font-size: 12px;
    line-height: 24px;
}

.canvas {
    flex: 1;
    min-height: 0;
    padding: 2px 3px 0;
    border-top: 1px solid #a8a8a8;
    border-left: 1px solid #a8a8a8;
    background-color: #fff;
}

.canvas svg {
    background-color: #000;
}

.lines {
    fill: none;
    stroke: #d4d4d4;
}

.points circle {
    fill: none;
    stroke: #c000c0;
}

.points text {
    fill: #c000c0;
    font: 18px "DejaVu Sans Mono", monospace;
}

.sheet-bar {
    display: flex;
    align-items: center;
    gap: 3px;
    height: 23px;
    padding-left: 4px;
    background: linear-gradient(#444, #707070 25%, #7b7b7b);
}

.sheet-bar button {
    display: flex;
    align-items: center;
    justify-content: center;
    width: 15px;
    height: 15px;
    border: 1px solid #fff;
    background-color: #e6e6e6;
}

.sheet-bar button svg {
    width: 9px;
    height: 8px;
    fill: #444;
    stroke: #555;
}

.sheet {
    position: relative;
    align-self: flex-start;
    width: 31px;
    height: 20px;
    margin-left: 2px;
}

.sheet svg {
    width: 31px;
    height: 20px;
}

.sheet span {
    position: absolute;
    left: 7px;
    top: 4px;
    font-weight: bold;
}

.side-tools {
    width: 25px;
    padding-top: 4px;
    background: linear-gradient(90deg, #d2d5da, #c4c8ce 45%, #99a1ac);
}

.side-tools .tool {
    height: 24px;
}

.more {
    width: 5px;
    height: 6px;
    margin: 2px 10px 3px;
}

.line {
    display: block;
    height: 2px;
    margin: 4px 5px;
    border-top: 1px solid #6f757e;
    border-bottom: 1px solid #f0f0f0;
}

.tiny-text {
    fill: #333;
    font: bold 8px "Liberation Sans", sans-serif;
}

.abc-text {
    fill: #333;
    font: 11px "Liberation Sans", sans-serif;
}

.help-text {
    fill: #fff;
    font: bold 16px "DejaVu Sans", sans-serif;
}

.view-tabs {
    display: flex;
    gap: 16px;
    height: 28px;
    padding-left: 5px;
    border-top: 2px solid #c4c4c4;
    border-bottom: 1px solid #999;
    background-color: #525252;
    color: #e8e8e8;
}

.view-tabs button {
    display: flex;
    align-items: center;
    gap: 3px;
    height: 23px;
    font-size: 14px;
}

.view-tabs svg {
    width: 18px;
    height: 18px;
}

.view-tabs .solid {
    gap: 6px;
}

.view-tabs .selected {
    padding: 0 5px 0 4px;
    border-radius: 0 0 4px 4px;
    background: linear-gradient(#d4d8de, #f6f8fa);
    color: #222;
    font-feature-settings: normal;
}
```
